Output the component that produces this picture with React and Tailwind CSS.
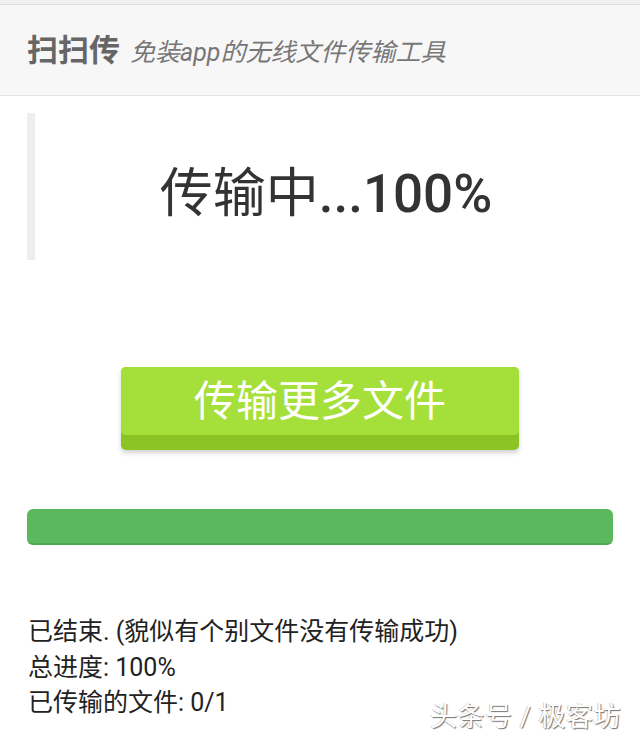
import React from 'react';

const font = { fontFamily: 'Roboto, "Noto Sans CJK SC", sans-serif' };

const App = () => {
  return (
    <div className="w-[640px] h-[740px] bg-white overflow-hidden relative" style={font}>
      {/* Top strip + header */}
      <div className="h-[5px] bg-[#f0f0f0] border-b border-[#dcdcdc]" />
      <div className="h-[91px] bg-[#f7f7f7] border-b border-[#e2e2e2] flex items-center pl-[27px] pt-[2px]">
        <span className="text-[31px] font-bold text-[#666]">扫扫传</span>
        <span className="ml-[10px] text-[25px] italic text-[#777] mt-[4px]">免装app的无线文件传输工具</span>
      </div>

      {/* Status block */}
      <div className="mt-[17px] ml-[27px] mr-[27px] h-[147px] border-l-[8px] border-[#eeeeee] flex items-center justify-center">
        <span className="text-[53px] text-[#333] leading-none mt-[16px] pl-[4px]">
          传输中<span className="font-medium">...100%</span>
        </span>
      </div>

      {/* Action button */}
      <div className="flex justify-center mt-[107px]">
        <button className="w-[398px] h-[83px] rounded-[5px] bg-[#8bc424] shadow-[0_3px_5px_rgba(0,0,0,0.18)] pb-[15px]">
          <div className="h-full rounded-[5px] bg-[#a5e03a] flex items-center justify-center text-white text-[42px] leading-none pt-[2px]">
            传输更多文件
          </div>
        </button>
      </div>

      {/* Progress bar */}
      <div className="mx-[27px] mt-[59px] h-[36px] rounded-[6px] bg-[#5cb85c] border-b-[2px] border-[#52a852]" />

      {/* Status text */}
      <div className="mt-[69px] pl-[28px] text-[25px] leading-[35.5px] text-[#222]">
        <div>已结束. (貌似有个别文件没有传输成功)</div>
        <div>总进度: 100%</div>
        <div>已传输的文件: 0/1</div>
      </div>

      {/* Watermark */}
      <div className="absolute left-[430px] top-[697px] text-[27px] text-white tracking-[0.5px] [text-shadow:1px_1px_1px_rgba(0,0,0,0.55),-1px_0_0_rgba(0,0,0,0.2)]">
        头条号 / 极客坊
      </div>
    </div>
  );
};

export default App;
